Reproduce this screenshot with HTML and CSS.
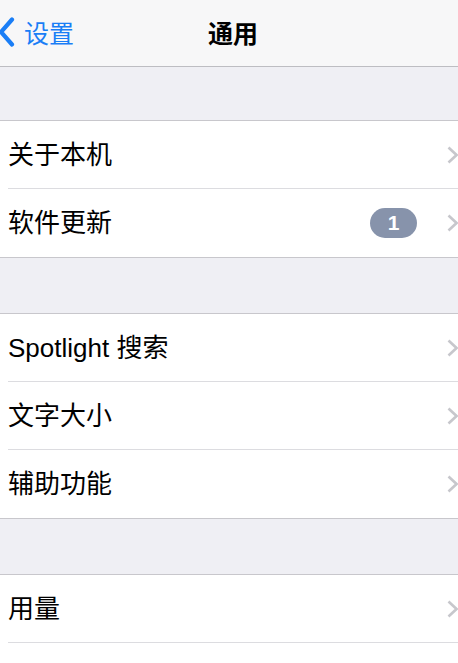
FILE: index.html
```html
<!DOCTYPE html>
<html lang="zh-CN">
<head>
<meta charset="utf-8">
<title>通用</title>
<link rel="stylesheet" href="styles.css">
</head>
<body>
<header class="nav">
  <a class="back" href="#">
    <svg class="back-icon" width="17" height="30" viewBox="0 0 17 30"><polyline points="14,2.5 3,15 14,27.5" fill="none" stroke="#1a7ef6" stroke-width="4.2" stroke-linecap="round" stroke-linejoin="round"/></svg>
    <span>设置</span>
  </a>
  <h1 class="title">通用</h1>
  <span class="spacer"></span>
</header>

<main class="content">
  <section class="group">
    <div class="row"><div class="row-inner"><span class="label">关于本机</span><svg class="chev" width="12" height="18" viewBox="0 0 12 18"><polyline points="1.5,1.5 9.5,9 1.5,16.5" fill="none" stroke="#c7c7cc" stroke-width="2.6"/></svg></div></div>
    <div class="row"><div class="row-inner"><span class="label">软件更新</span><span class="badge">1</span><svg class="chev" width="12" height="18" viewBox="0 0 12 18"><polyline points="1.5,1.5 9.5,9 1.5,16.5" fill="none" stroke="#c7c7cc" stroke-width="2.6"/></svg></div></div>
  </section>

  <section class="group">
    <div class="row"><div class="row-inner"><span class="label">Spotlight 搜索</span><svg class="chev" width="12" height="18" viewBox="0 0 12 18"><polyline points="1.5,1.5 9.5,9 1.5,16.5" fill="none" stroke="#c7c7cc" stroke-width="2.6"/></svg></div></div>
    <div class="row"><div class="row-inner"><span class="label">文字大小</span><svg class="chev" width="12" height="18" viewBox="0 0 12 18"><polyline points="1.5,1.5 9.5,9 1.5,16.5" fill="none" stroke="#c7c7cc" stroke-width="2.6"/></svg></div></div>
    <div class="row"><div class="row-inner"><span class="label">辅助功能</span><svg class="chev" width="12" height="18" viewBox="0 0 12 18"><polyline points="1.5,1.5 9.5,9 1.5,16.5" fill="none" stroke="#c7c7cc" stroke-width="2.6"/></svg></div></div>
  </section>

  <section class="group">
    <div class="row"><div class="row-inner"><span class="label">用量</span><svg class="chev" width="12" height="18" viewBox="0 0 12 18"><polyline points="1.5,1.5 9.5,9 1.5,16.5" fill="none" stroke="#c7c7cc" stroke-width="2.6"/></svg></div></div>
    <div class="row"><div class="row-inner"><span class="label">后台应用程序刷新</span><svg class="chev" width="12" height="18" viewBox="0 0 12 18"><polyline points="1.5,1.5 9.5,9 1.5,16.5" fill="none" stroke="#c7c7cc" stroke-width="2.6"/></svg></div></div>
  </section>
</main>
</body>
</html>
```

FILE: styles.css
```css
html, body {
  margin: 0;
  padding: 0;
}
body {
  width: 458px;
  height: 663px;
  overflow: hidden;
  background: #efeff4;
  font-family: "Liberation Sans", "Noto Sans CJK SC", sans-serif;
  color: #000;
}
.nav {
  height: 67px;
  box-sizing: border-box;
  padding-bottom: 3px;
  background: #f7f7f8;
  border-bottom: 1px solid #bdbdc2;
  display: grid;
  grid-template-columns: 1fr auto 1fr;
  align-items: center;
}
.back {
  display: flex;
  align-items: center;
  gap: 9px;
  color: #1a7ef6;
  text-decoration: none;
  font-size: 25px;
}
.back-icon {
  display: block;
  margin-left: -2px;
}
.title {
  margin: 0;
  font-size: 25px;
  font-weight: 700;
  padding-left: 8px;
}
.content {
  display: block;
}
.group {
  margin-top: 55px;
  background: #fff;
  border-top: 1px solid #c8c7cc;
  border-bottom: 1px solid #c8c7cc;
}
.group:first-child {
  margin-top: 53px;
}
.row {
  padding-left: 8px;
}
.row-inner {
  height: 67px;
  display: flex;
  align-items: center;
  border-bottom: 1px solid #dcdce0;
}
.row:last-child .row-inner {
  border-bottom-color: transparent;
}
.label {
  flex: 1;
  font-size: 26px;
  line-height: 1;
}
.badge {
  width: 47px;
  height: 30px;
  border-radius: 15px;
  background: #8793ab;
  color: #fff;
  font-weight: 700;
  font-size: 21px;
  display: flex;
  align-items: center;
  justify-content: center;
  margin-right: 30px;
}
.chev {
  display: block;
  margin-right: -1px;
  flex: none;
}
```
